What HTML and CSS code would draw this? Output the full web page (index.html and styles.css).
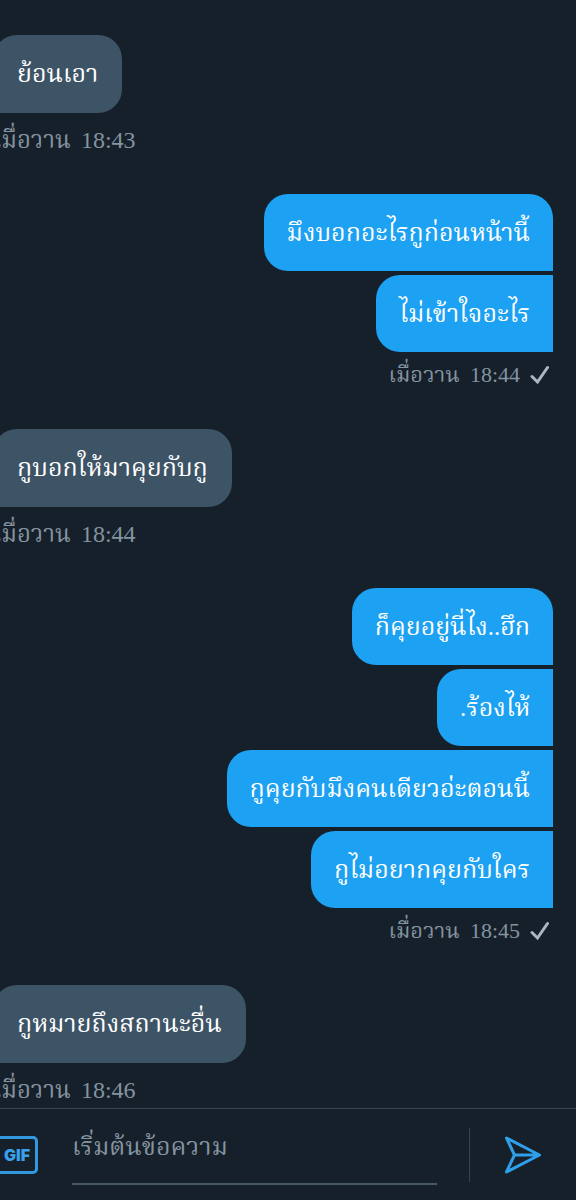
FILE: index.html
```html
<!DOCTYPE html>
<html lang="th">
<head>
<meta charset="utf-8">
<meta name="viewport" content="width=device-width, initial-scale=1">
<title>ข้อความ</title>
<link rel="stylesheet" href="styles.css">
</head>
<body>
<main class="thread">
  <section class="group received">
    <p class="bubble">ย้อนเอา</p>
    <p class="meta"><span>เมื่อวาน</span><time>18:43</time></p>
  </section>
  <section class="group sent">
    <p class="bubble">มึงบอกอะไรกูก่อนหน้านี้</p>
    <p class="bubble">ไม่เข้าใจอะไร</p>
    <p class="meta"><span>เมื่อวาน</span><time>18:44</time><svg class="check" viewBox="0 0 20 20" aria-hidden="true"><path d="M2 11.500L7.500 17L17.500 2.500"/></svg></p>
  </section>
  <section class="group received">
    <p class="bubble">กูบอกให้มาคุยกับกู</p>
    <p class="meta"><span>เมื่อวาน</span><time>18:44</time></p>
  </section>
  <section class="group sent">
    <p class="bubble">ก็คุยอยู่นี่ไง..ฮึก</p>
    <p class="bubble">.ร้องไห้</p>
    <p class="bubble">กูคุยกับมึงคนเดียวอ่ะตอนนี้</p>
    <p class="bubble">กูไม่อยากคุยกับใคร</p>
    <p class="meta"><span>เมื่อวาน</span><time>18:45</time><svg class="check" viewBox="0 0 20 20" aria-hidden="true"><path d="M2 11.500L7.500 17L17.500 2.500"/></svg></p>
  </section>
  <section class="group received">
    <p class="bubble">กูหมายถึงสถานะอื่น</p>
    <p class="meta"><span>เมื่อวาน</span><time>18:46</time></p>
  </section>
</main>
<form class="composer">
  <button class="gif" type="button">GIF</button>
  <input class="field" type="text" placeholder="เริ่มต้นข้อความ" aria-label="เริ่มต้นข้อความ">
  <button class="send" type="button" aria-label="ส่ง"><svg class="plane" viewBox="0 0 40 40" aria-hidden="true"><path d="M3.500 3L36.500 20L3.500 37L11.500 20ZM11.500 20H35"/></svg></button>
</form>
</body>
</html>
```
FILE: styles.css
```css
* { box-sizing: border-box; }
body {
  margin: 0;
  min-height: 100vh;
  display: flex;
  flex-direction: column;
  overflow-x: hidden;
  background: #16202a;
  color: #fff;
  font-family: "Liberation Serif", "Noto Serif Thai", serif;
}
p { margin: 0; }
.thread {
  flex: 1;
  display: flex;
  flex-direction: column;
  gap: 36px;
  padding: 35px 23px 0 0;
}
.group {
  display: flex;
  flex-direction: column;
  gap: 4px;
}
.sent { align-items: flex-end; }
.received { align-items: flex-start; margin-left: -7px; }
.bubble {
  padding: 18px 23px;
  font-size: 25px;
  line-height: 41px;
  border-radius: 24px;
}
.sent .bubble {
  background: #1da1f2;
  border-radius: 24px 0 0 24px;
}
.sent .bubble:first-child { border-top-right-radius: 24px; }
.received .bubble {
  padding: 18px 24px;
  background: #3d5466;
  line-height: 42px;
  border-bottom-left-radius: 0;
}
.meta {
  display: flex;
  align-items: center;
  gap: 10px;
  color: #8493a0;
  font-size: 22px;
  line-height: 37px;
}
.received .meta {
  padding-top: 5px;
  font-size: 24px;
  line-height: 36px;
}
.check {
  width: 20px;
  height: 20px;
  margin-right: 3px;
  fill: none;
  stroke: #aab8c2;
  stroke-width: 3;
  stroke-linecap: round;
}
.composer {
  display: flex;
  align-items: center;
  height: 92px;
  border-top: 1px solid #38444d;
}
.gif {
  width: 44px;
  height: 38px;
  margin-left: -6px;
  padding: 0 4px 0 6px;
  border: 3px solid #3298e0;
  border-radius: 5px;
  background: none;
  color: #3aa0ea;
  font: 900 16px Inter, sans-serif;
}
.field {
  flex: 1;
  min-width: 0;
  height: 60px;
  margin: 0 32px 0 34px;
  padding: 0 0 14px;
  border: 0;
  border-bottom: 2px solid #465866;
  background: none;
  color: #fff;
  font: 25px "Liberation Serif", "Noto Serif Thai", serif;
}
.field::placeholder { color: #8493a0; opacity: 1; }
.send {
  height: 54px;
  padding: 0 33px;
  border: 0;
  border-left: 1px solid #38444d;
  background: none;
}
.plane {
  display: block;
  width: 40px;
  height: 40px;
  fill: none;
  stroke: #2f9fea;
  stroke-width: 3;
  stroke-linejoin: round;
  stroke-linecap: round;
}
```
